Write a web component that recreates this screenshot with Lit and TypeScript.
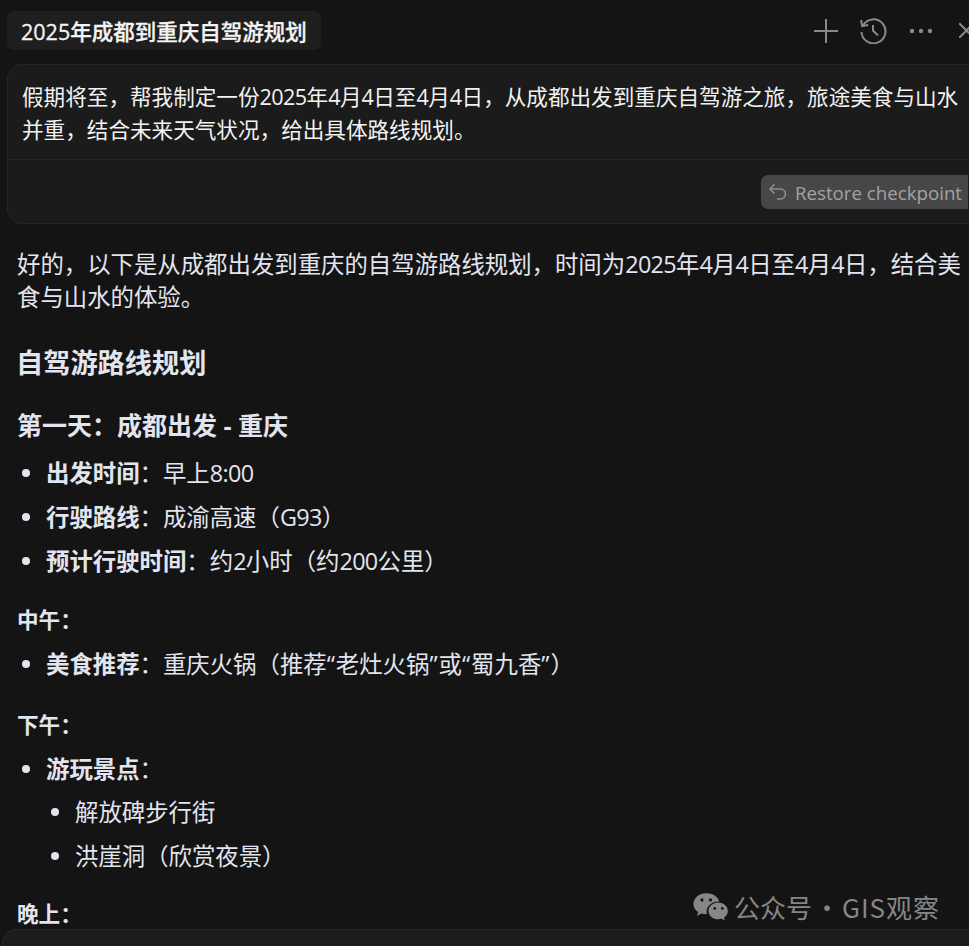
import { LitElement, html, css } from "lit";
import { customElement } from "lit/decorators.js";

@customElement("app-root")
export class AppRoot extends LitElement {
  static styles = css`
    :host {
      display: block;
      position: relative;
      width: 969px;
      height: 946px;
      overflow: hidden;
      background: #141414;
      color: #e2e5ef;
      font-family: "Open Sans", "Noto Sans CJK SC", sans-serif;
      font-size: 23.4px;
    }
    .n { letter-spacing: -0.028em; }
    .q { letter-spacing: 1px; }
    .header { display: flex; align-items: center; height: 39px; padding: 11px 0 0 7px; }
    .chip {
      background: #1e1e1e; border-radius: 7px; height: 39px; display: flex; align-items: center;
      padding: 0 14px; font-size: 21.5px; font-weight: 500; -webkit-text-stroke: 0.3px #f4f4f4; color: #f4f4f4; white-space: nowrap;
    }
    .tools { position: absolute; left: 814px; top: 17px; display: flex; align-items: center; }
    .tools svg { display: block; stroke: #8a8a8a; fill: none; stroke-width: 2; flex: none; }
    .tools .hist { margin-left: 22px; }
    .tools .dots { margin-left: 22px; stroke: none; fill: #8a8a8a; }
    .tools .close { margin-left: 26px; }
    .card {
      margin: 14px -40px 0 7px; height: 158px; border: 1px solid #262626; border-radius: 14px; background: #1b1b1b;
    }
    .card .msg {
      height: 95px; padding: 15px 48px 0 14px; box-sizing: border-box; border-bottom: 1px solid #262626;
      color: #f2f2f2; line-height: 33px; font-size: 21.6px;
    }
    .card .foot { display: flex; justify-content: flex-end; padding: 15px 0 0 0; margin-right: 32px; }
    .restore {
      display: flex; align-items: center; gap: 8px; height: 34px; width: 207px; box-sizing: border-box; padding-left: 8px;
      background: #474747; border-radius: 7px 0 0 7px; color: #a2a2a2; font-size: 18.7px; white-space: nowrap;
      margin-right: 8px;
    }
    .restore svg { stroke: #8f8f8f; fill: none; stroke-width: 1.6; flex: none; }
    .body { padding: 0 0 0 17px; }
    p { margin: 0; }
    .intro { margin-top: 24px; line-height: 33px; width: 951px; }
    h3 { margin: 0 0 0 -1px; font-weight: 700; font-size: 27.2px; line-height: 36px; margin-top: 31px; }
    h4 { margin: 0; font-weight: 700; font-size: 25px; line-height: 34px; margin-top: 27px; }
    h5 { margin: 0; font-weight: 700; font-size: 21.6px; line-height: 30px; margin-top: 22px; }
    h5.mid { margin-top: 24px; }
    h5.last { margin-top: 21px; }
    ul { margin: 0; padding: 0 0 0 29px; list-style: none; }
    li { position: relative; line-height: 44px; white-space: nowrap; }
    li::before {
      content: ""; position: absolute; left: -24px; top: 18px; width: 8px; height: 8px; border-radius: 50%; background: #e2e5ef;
    }
    li b { font-weight: 700; }
    ul ul { padding-left: 29px; margin-top: -1px; }
    .first { margin-top: 9px; }
    .one { margin-top: 7px; }
    .input {
      position: absolute; left: 2px; right: -20px; top: 929px; height: 60px; background: #1c1c1c;
      border: 1px solid #2a2a2a; border-radius: 14px;
    }
    .mark {
      position: absolute; left: 693px; top: 890px; display: flex; align-items: center; gap: 6px;
      color: #868686; font-size: 26px; white-space: nowrap; line-height: 34px; font-family: "Noto Sans CJK SC", sans-serif;
    }
    .mark .d { display: inline-block; width: 30px; text-align: center; }
    .mark .g { letter-spacing: 1px; }
  `;

  render() {
    return html`
      <div class="header">
        <div class="chip">2025年成都到重庆自驾游规划</div>
        <div class="tools">
          <svg width="24" height="24" viewBox="0 0 24 24"><path d="M0 12h24M12 0v24"/></svg>
          <svg class="hist" width="27" height="27" viewBox="0 0 27 27"><path d="M1 3l1.200 6 6-1"/><path d="M3 8.500A12 12 0 1 1 1.500 15"/><path d="M13 8v5.500l5 5"/></svg>
          <svg class="dots" width="24" height="6" viewBox="0 0 24 6"><circle cx="3" cy="3" r="2.200"/><circle cx="12" cy="3" r="2.200"/><circle cx="21" cy="3" r="2.200"/></svg>
          <svg class="close" width="15" height="15" viewBox="0 0 15 15"><path d="M0 0l15 15M15 0L0 15"/></svg>
        </div>
      </div>
      <div class="card">
        <div class="msg">假期将至，帮我制定一份<span class="n">2025</span>年<span class="n">4</span>月<span class="n">4</span>日至<span class="n">4</span>月<span class="n">4</span>日，从成都出发到重庆自驾游之旅，旅途美食与山水并重，结合未来天气状况，给出具体路线规划。</div>
        <div class="foot">
          <div class="restore">
            <svg width="18" height="18" viewBox="0 0 18 18"><path d="M5.500 1 1 6l4.500 4.500"/><path d="M1.500 6h10a5 5 0 0 1 0 10H8"/></svg>
            Restore checkpoint
          </div>
        </div>
      </div>
      <div class="body">
        <p class="intro">好的，以下是从成都出发到重庆的自驾游路线规划，时间为<span class="n">2025</span>年<span class="n">4</span>月<span class="n">4</span>日至<span class="n">4</span>月<span class="n">4</span>日，结合美食与山水的体验。</p>
        <h3>自驾游路线规划</h3>
        <h4>第一天：成都出发 - 重庆</h4>
        <ul class="first">
          <li><b>出发时间</b>：早上<span class="n">8:00</span></li>
          <li><b>行驶路线</b>：成渝高速（<span class="n">G93</span>）</li>
          <li><b>预计行驶时间</b>：约<span class="n">2</span>小时（约<span class="n">200</span>公里）</li>
        </ul>
        <h5>中午：</h5>
        <ul class="one"><li><b>美食推荐</b>：重庆火锅（推荐<span class="q">“</span>老灶火锅<span class="q">”</span>或<span class="q">“</span>蜀九香<span class="q">”</span>）</li></ul>
        <h5 class="mid">下午：</h5>
        <ul class="one">
          <li><b>游玩景点</b>：
            <ul>
              <li>解放碑步行街</li>
              <li>洪崖洞（欣赏夜景）</li>
            </ul>
          </li>
        </ul>
        <h5 class="last">晚上：</h5>
      </div>
      <div class="input"></div>
      <div class="mark">
        <svg width="35" height="30" viewBox="0 0 37 31">
          <path fill="#868686" d="M14 1C6.500 1 .5 6 .5 12.200c0 3.500 1.900 6.600 4.900 8.700L4.200 25l4.600-2.500c1.600.5 3.300.7 5.100.7h.9a9.600 9.600 0 0 1-.4-2.800c0-6 5.600-10.700 12.500-10.700h.8C26.500 4.700 20.800 1 14 1Z"/>
          <path fill="#868686" d="M26.700 10.800c-5.700 0-10.300 3.900-10.300 8.800s4.600 8.800 10.300 8.800c1.200 0 2.300-.2 3.400-.5l3.700 2-1-3.300c2.500-1.600 4-4.100 4-7 0-4.900-4.500-8.800-10.100-8.800Z"/>
          <circle cx="9.500" cy="8" r="1.700" fill="#141414"/><circle cx="18.500" cy="8" r="1.700" fill="#141414"/>
          <circle cx="23" cy="17" r="1.400" fill="#141414"/><circle cx="31" cy="17" r="1.400" fill="#141414"/>
        </svg>
        <span>公众号<span class="d">·</span><span class="g">GIS观察</span></span>
      </div>
    `;
  }
}
